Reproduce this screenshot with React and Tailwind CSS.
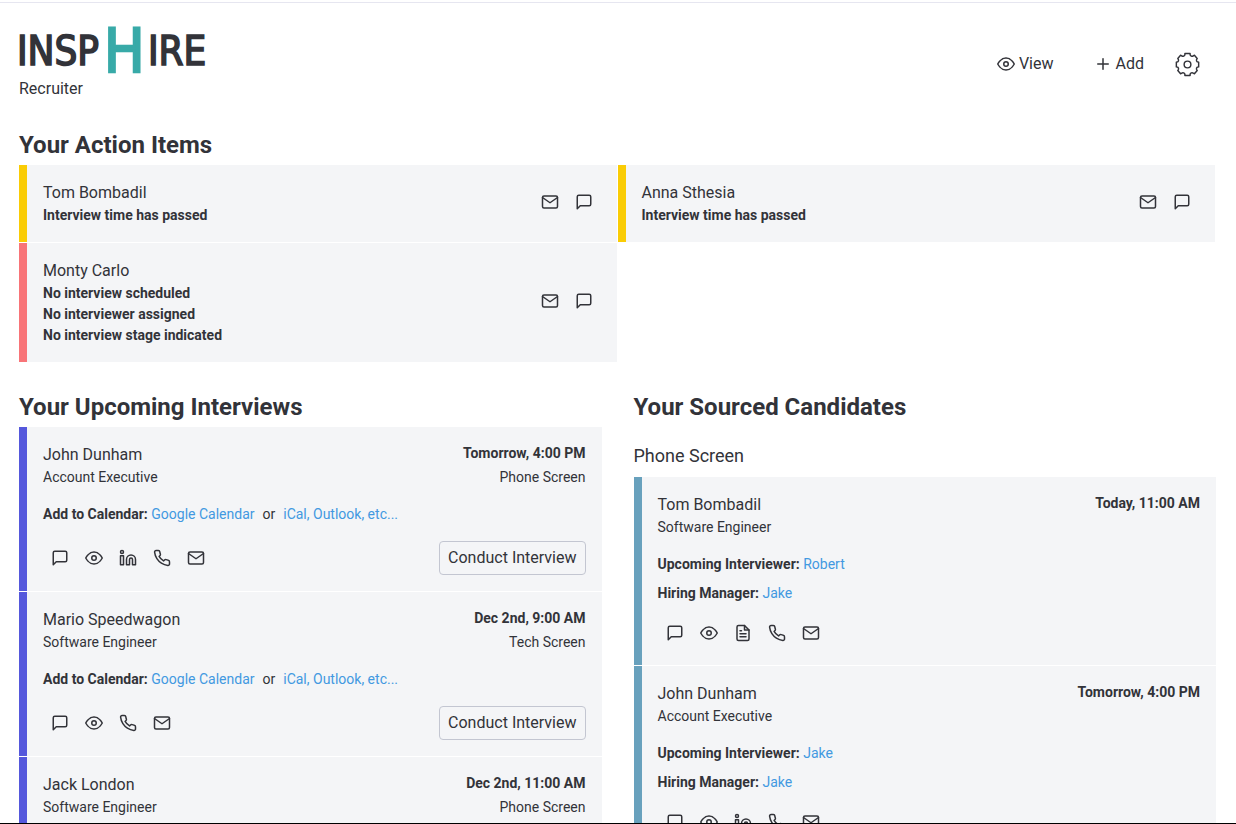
import {
  FiEye,
  FiFileText,
  FiLinkedin,
  FiMail,
  FiMessageSquare,
  FiPhone,
  FiPlus,
} from "react-icons/fi";

const ICONS = {
  message: [FiMessageSquare, "Message"],
  view: [FiEye, "View profile"],
  linkedin: [FiLinkedin, "LinkedIn"],
  resume: [FiFileText, "Resume"],
  phone: [FiPhone, "Call"],
  mail: [FiMail, "Email"],
};

const actionItems = [
  { name: "Tom Bombadil", notes: ["Interview time has passed"], bar: "border-[#facc05]" },
  { name: "Anna Sthesia", notes: ["Interview time has passed"], bar: "border-[#facc05]" },
  {
    name: "Monty Carlo",
    notes: ["No interview scheduled", "No interviewer assigned", "No interview stage indicated"],
    bar: "border-[#f87478]",
  },
];

const interviews = [
  {
    name: "John Dunham",
    role: "Account Executive",
    time: "Tomorrow, 4:00 PM",
    stage: "Phone Screen",
    icons: ["message", "view", "linkedin", "phone", "mail"],
  },
  {
    name: "Mario Speedwagon",
    role: "Software Engineer",
    time: "Dec 2nd, 9:00 AM",
    stage: "Tech Screen",
    icons: ["message", "view", "phone", "mail"],
  },
  {
    name: "Jack London",
    role: "Software Engineer",
    time: "Dec 2nd, 11:00 AM",
    stage: "Phone Screen",
    icons: ["message", "view", "phone", "mail"],
  },
];

const candidates = [
  {
    name: "Tom Bombadil",
    role: "Software Engineer",
    time: "Today, 11:00 AM",
    interviewer: "Robert",
    manager: "Jake",
    icons: ["message", "view", "resume", "phone", "mail"],
  },
  {
    name: "John Dunham",
    role: "Account Executive",
    time: "Tomorrow, 4:00 PM",
    interviewer: "Jake",
    manager: "Jake",
    icons: ["message", "view", "linkedin", "phone", "mail"],
  },
];

function Logo() {
  return (
    <svg
      width="190"
      height="46"
      viewBox="0 0 190 46"
      overflow="visible"
      className="font-['DejaVu_Sans_Condensed','DejaVu_Sans',sans-serif] font-normal"
    >
      <g fill="#323339" stroke="#323339" strokeWidth="1.6" fontSize="40">
        <text x="-2" y="37.500">INSP</text>
        <text x="129" y="37.500">IRE</text>
      </g>
      <text x="85" y="45" fontSize="60" fill="#38aaa8" stroke="#38aaa8" strokeWidth="2.4">H</text>
    </svg>
  );
}

function GearIcon() {
  return (
    <svg width="25" height="25" viewBox="0 0 26 26" fill="none" stroke="currentColor" strokeWidth="1.5" strokeLinejoin="round" aria-hidden="true">
      <path d="M10.300 1.500h5.400v1.200a2 2 0 0 0 3.300 1.300l1.200-.6 2.900 3.300-.7 1.300a2.200 2.200 0 0 0 .6 2.200l1.600.3v5l-1.600.3a2.200 2.200 0 0 0-.6 2.200l.7 1.300-2.900 3.300-1.200-.6a2 2 0 0 0-3.300 1.300v1.200h-5.400v-1.200a2 2 0 0 0-3.300-1.300l-1.200.6-2.900-3.300.7-1.300a2.200 2.200 0 0 0-.6-2.200l-1.600-.3v-5l1.600-.3a2.200 2.200 0 0 0 .6-2.200l-.7-1.300 2.900-3.300 1.200.6a2 2 0 0 0 3.300-1.300z" />
      <circle cx="13" cy="13" r="3.500" />
    </svg>
  );
}

function IconButtons({ names }) {
  return (
    <div className="flex">
      {names.map((name) => {
        const [Icon, label] = ICONS[name];
        return (
          <button key={name} type="button" aria-label={label} className="p-2">
            <Icon size={18} />
          </button>
        );
      })}
    </div>
  );
}

function CardHeading({ name, role, time, stage }) {
  return (
    <div className="flex justify-between gap-4">
      <div>
        <h3 className="leading-6">{name}</h3>
        <p className="text-sm leading-[21px]">{role}</p>
      </div>
      <div className="flex flex-col justify-between text-right text-sm leading-[21px]">
        <p className="font-bold">{time}</p>
        {stage && <p>{stage}</p>}
      </div>
    </div>
  );
}

function Link({ children }) {
  return (
    <a href="#" className="text-[#4299e1]">
      {children}
    </a>
  );
}

export default function App() {
  return (
    <div className="h-screen overflow-y-auto border-b border-black bg-white pt-[2px] font-[Roboto,sans-serif] text-base text-[#323339] [scrollbar-width:none]">
      <header className="flex items-center justify-between border-t border-[#e6e6f0] pt-6 pr-9 pl-[19px]">
        <div>
          <Logo />
          <p className="mt-1 leading-6">Recruiter</p>
        </div>
        <nav className="flex items-center">
          <button type="button" className="flex items-center gap-1">
            <FiEye size={18} />
            View
          </button>
          <button type="button" className="ml-10 flex items-center gap-1">
            <FiPlus size={18} />
            Add
          </button>
          <button type="button" aria-label="Settings" className="ml-[31px]">
            <GearIcon />
          </button>
        </nav>
      </header>

      <main className="pr-5 pl-[19px]">
        <section className="mt-[26px]">
          <h2 className="text-2xl leading-9 font-bold">Your Action Items</h2>
          <div className="mt-[2px] mr-px grid grid-cols-2 gap-px">
            {actionItems.map((item) => (
              <article
                key={item.name}
                className={"flex items-center justify-between border-l-8 bg-[#f4f5f7] p-4 " + item.bar}
              >
                <div>
                  <h3 className="leading-6">{item.name}</h3>
                  {item.notes.map((note) => (
                    <p key={note} className="text-sm leading-[21px] font-bold">
                      {note}
                    </p>
                  ))}
                </div>
                <div className="pb-1">
                  <IconButtons names={["mail", "message"]} />
                </div>
              </article>
            ))}
          </div>
        </section>

        <div className="mt-[27px] grid grid-cols-2 gap-8">
          <section>
            <h2 className="text-2xl leading-9 font-bold">Your Upcoming Interviews</h2>
            <div className="mt-[2px] flex flex-col gap-px">
              {interviews.map((item) => (
                <article key={item.name} className="border-l-8 border-[#5558dc] bg-[#f4f5f7] p-4">
                  <CardHeading {...item} />
                  <p className="mt-4 text-sm leading-[21px]">
                    <b>Add to Calendar:</b> <Link>Google Calendar</Link>
                    <span className="mx-2">or</span>
                    <Link>iCal, Outlook, etc...</Link>
                  </p>
                  <div className="mt-4 flex items-center justify-between">
                    <IconButtons names={item.icons} />
                    <button type="button" className="rounded border border-[#c3c6d1] px-2 py-1 leading-6">
                      Conduct Interview
                    </button>
                  </div>
                </article>
              ))}
            </div>
          </section>

          <section>
            <h2 className="text-2xl leading-9 font-bold">Your Sourced Candidates</h2>
            <h3 className="mt-[17px] text-lg leading-[27px]">Phone Screen</h3>
            <div className="mt-2 flex flex-col gap-px">
              {candidates.map((item) => (
                <article key={item.name} className="border-l-8 border-[#68a1bd] bg-[#f4f5f7] px-4 pt-4 pb-[15px]">
                  <CardHeading name={item.name} role={item.role} time={item.time} />
                  <p className="mt-4 text-sm leading-[21px]">
                    <b>Upcoming Interviewer:</b> <Link>{item.interviewer}</Link>
                  </p>
                  <p className="mt-2 text-sm leading-[21px]">
                    <b>Hiring Manager:</b> <Link>{item.manager}</Link>
                  </p>
                  <div className="mt-3">
                    <IconButtons names={item.icons} />
                  </div>
                </article>
              ))}
            </div>
          </section>
        </div>
      </main>
    </div>
  );
}
